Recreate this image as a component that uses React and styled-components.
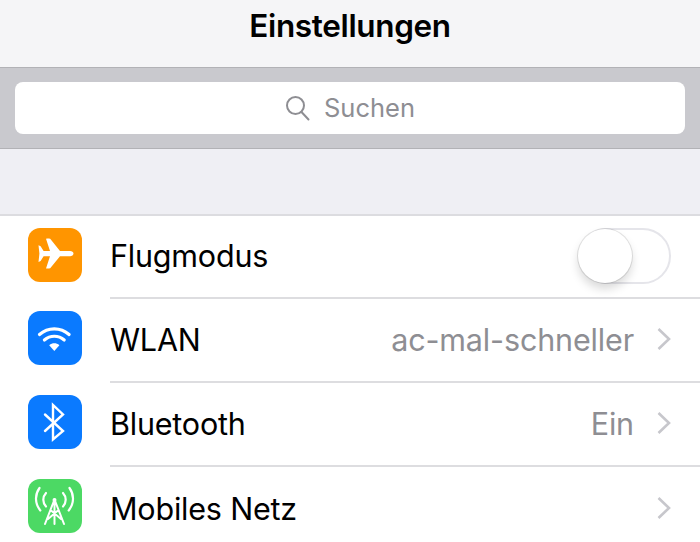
import React from 'react';
import styled, { createGlobalStyle } from 'styled-components';

const Global = createGlobalStyle`
  html, body {
    margin: 0;
    padding: 0;
    background: #fff;
  }
`;

const Screen = styled.div`
  width: 700px;
  height: 542px;
  overflow: hidden;
  background: #efeff4;
  font-family: Inter, 'Liberation Sans', sans-serif;
  color: #000;
`;

const NavBar = styled.header`
  height: 67px;
  background: #f5f5f7;
  display: flex;
  align-items: center;
  justify-content: center;
  padding-bottom: 16px;
  box-sizing: border-box;
`;

const Title = styled.h1`
  margin: 0;
  font-size: 31.5px;
  font-weight: 600;
  letter-spacing: -0.35px;
`;

const SearchBar = styled.div`
  height: 82px;
  box-sizing: border-box;
  background: #c9c9ce;
  border-top: 1px solid #b2b2b6;
  border-bottom: 1px solid #b2b2b6;
  padding: 14px 15px;
`;

const SearchField = styled.div`
  height: 52px;
  background: #fff;
  border-radius: 8px;
  display: flex;
  align-items: center;
  justify-content: center;
  gap: 13px;
  color: #8e8e93;
  font-size: 25.5px;
`;

const SearchText = styled.span`
  margin-bottom: 2px;
`;

const Spacer = styled.div`
  height: 65px;
  background: #efeff4;
`;

const List = styled.section`
  background: #fff;
  border-top: 2px solid #dcdce0;
`;

const Row = styled.div`
  height: ${p => (p.$first ? '83px' : '84px')};
  display: flex;
  align-items: center;
  padding-left: 28px;
`;

const IconBox = styled.div`
  width: 54px;
  height: 54px;
  flex: none;
  margin-bottom: 6px;
  border-radius: 12px;
  background: ${p => p.$bg};
  display: flex;
  align-items: center;
  justify-content: center;
`;

const RowBody = styled.div`
  flex: 1;
  align-self: stretch;
  margin-left: 28px;
  padding-right: 29px;
  padding-bottom: 2px;
  display: flex;
  align-items: center;
  border-bottom: ${p => (p.$last ? 'none' : '2px solid #dddde0')};
`;

const Label = styled.span`
  flex: 1;
  font-size: 30.5px;
  letter-spacing: -0.2px;
`;

const Value = styled.span`
  font-size: 30.5px;
  letter-spacing: -0.15px;
  color: #8e8e93;
`;

const Chevron = styled.svg`
  width: 14px;
  height: 22px;
  margin-left: 23px;
  flex: none;
`;

const Toggle = styled.div`
  position: relative;
  width: 92px;
  height: 56px;
  box-sizing: border-box;
  border: 2px solid #e5e5ea;
  border-radius: 28px;
  background: #fff;
`;

const Thumb = styled.div`
  position: absolute;
  left: -3px;
  top: -1px;
  width: 54px;
  height: 54px;
  border-radius: 50%;
  background: #fff;
  box-shadow: 0 0 0 1px rgba(0, 0, 0, 0.1), 0 6px 10px rgba(0, 0, 0, 0.15);
`;

const Glyph = styled.svg`
  width: 54px;
  height: 54px;
  display: block;
`;

const SearchIcon = () => (
  <svg width="26" height="26" viewBox="0 0 26 26" fill="none" stroke="#8e8e93" strokeWidth="2" strokeLinecap="round">
    <circle cx="10.5" cy="10.5" r="8.5" />
    <path d="M16.5 17l7 7.5" />
  </svg>
);

const PlaneIcon = () => (
  <Glyph viewBox="0 0 54 54">
    <path
      fill="#fff"
      d="M45.5 25.6c0-1.500-1.600-2.600-3.400-2.600H32L22.400 11.100c-.4-.5-1.400-.7-4.400-.3l4 12.200H15.600l-3-4.800-2.100-.9.900 8.300-.9 8.300 2.100-.9 3-4.800H22l-4 12.200c3 .4 4 .2 4.400-.3L32 28.200h10.100c1.800 0 3.400-1.100 3.400-2.600z"
    />
  </Glyph>
);

const WifiIcon = () => (
  <Glyph viewBox="0 0 54 54" fill="none" stroke="#fff" strokeWidth="3.2" strokeLinecap="round">
    <path d="M11.5 23.5c8.6-7.6 21-7.6 29.6 0" />
    <path d="M16.4 29c5.8-5 14-5 19.8 0" />
    <path fill="#fff" stroke="none" d="M21.2 34.2c3.2-2.5 7-2.5 10.2 0L26.3 40z" />
  </Glyph>
);

const BluetoothIcon = () => (
  <Glyph viewBox="0 0 54 54" fill="none" stroke="#fff" strokeWidth="2.4" strokeLinecap="round" strokeLinejoin="miter">
    <path d="M17 19.5l18 16.5-10 8.5V10l10 9.5L17 36" />
  </Glyph>
);

const CellIcon = () => (
  <Glyph viewBox="0 0 54 54" fill="none" stroke="#fff" strokeWidth="2" strokeLinecap="round" strokeLinejoin="round">
    <path strokeWidth="2.2" d="M11.5 9c-4.8 6.6-4.8 15.4.8 22.5M41.5 9c4.8 6.6 4.8 15.4-.8 22.5" />
    <path strokeWidth="2.2" d="M18 14c-3.6 4-3.6 9.5 0 13.5M35 14c3.6 4 3.6 9.5 0 13.5" />
    <path d="M26.5 20.5L17 45M26.5 20.5L36 45M26.5 20.5V45M22.5 31l10.500 9M30.500 31l-10.500 9" />
    <circle cx="26.5" cy="21" r="2" fill="#fff" stroke="none" />
  </Glyph>
);

const ChevronRight = () => (
  <Chevron viewBox="0 0 14 22" fill="none" stroke="#c7c7cc" strokeWidth="2.6">
    <path d="M1.5 1l10.500 10-10.500 10" />
  </Chevron>
);

const rows = [
  { label: 'WLAN', value: 'ac-mal-schneller', bg: '#0a7aff', icon: <WifiIcon /> },
  { label: 'Bluetooth', value: 'Ein', bg: '#0a7aff', icon: <BluetoothIcon /> },
  { label: 'Mobiles Netz', bg: '#4cd964', icon: <CellIcon />, last: true },
];

export default function App() {
  return (
    <Screen>
      <Global />
      <NavBar>
        <Title>Einstellungen</Title>
      </NavBar>
      <SearchBar>
        <SearchField>
          <SearchIcon />
          <SearchText>Suchen</SearchText>
        </SearchField>
      </SearchBar>
      <Spacer />
      <List>
        <Row $first>
          <IconBox $bg="#ff9500">
            <PlaneIcon />
          </IconBox>
          <RowBody>
            <Label>Flugmodus</Label>
            <Toggle>
              <Thumb />
            </Toggle>
          </RowBody>
        </Row>
        {rows.map(r => (
          <Row key={r.label}>
            <IconBox $bg={r.bg}>{r.icon}</IconBox>
            <RowBody $last={r.last}>
              <Label>{r.label}</Label>
              {r.value && <Value>{r.value}</Value>}
              <ChevronRight />
            </RowBody>
          </Row>
        ))}
      </List>
    </Screen>
  );
}
